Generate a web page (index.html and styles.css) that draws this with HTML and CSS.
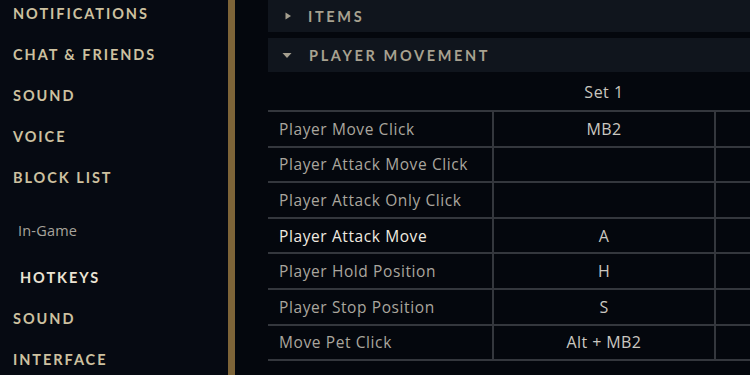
FILE: index.html
```html
<!DOCTYPE html>
<html>
<head>
<meta charset="utf-8">
<link rel="stylesheet" href="styles.css">
</head>
<body>
<div class="app">
  <nav class="sidebar">
    <ul class="menu">
      <li class="item">NOTIFICATIONS</li>
      <li class="item">CHAT &amp; FRIENDS</li>
      <li class="item">SOUND</li>
      <li class="item">VOICE</li>
      <li class="item">BLOCK LIST</li>
      <li class="group">In-Game</li>
      <li class="item active">HOTKEYS</li>
      <li class="item">SOUND</li>
      <li class="item">INTERFACE</li>
    </ul>
  </nav>
  <div class="divider"></div>
  <main class="main">
    <div class="section collapsed">
      <svg class="caret" width="7" height="8" viewBox="0 0 7 8"><path d="M0.5 0.5 L6 4 L0.5 7.5 Z" fill="#a59f8f"/></svg>
      <span>ITEMS</span>
    </div>
    <div class="section expanded">
      <svg class="caret" width="10" height="7" viewBox="0 0 10 7"><path d="M0.5 1 L9.5 1 L5 6 Z" fill="#a59f8f"/></svg>
      <span>PLAYER MOVEMENT</span>
    </div>
    <div class="table">
      <div class="thead">
        <div class="cell"></div>
        <div class="cell head">Set 1</div>
        <div class="cell"></div>
      </div>
      <div class="row"><div class="cell label">Player Move Click</div><div class="cell value">MB2</div><div class="cell"></div></div>
      <div class="row"><div class="cell label">Player Attack Move Click</div><div class="cell value"></div><div class="cell"></div></div>
      <div class="row"><div class="cell label">Player Attack Only Click</div><div class="cell value"></div><div class="cell"></div></div>
      <div class="row"><div class="cell label bright">Player Attack Move</div><div class="cell value">A</div><div class="cell"></div></div>
      <div class="row"><div class="cell label">Player Hold Position</div><div class="cell value">H</div><div class="cell"></div></div>
      <div class="row"><div class="cell label">Player Stop Position</div><div class="cell value">S</div><div class="cell"></div></div>
      <div class="row"><div class="cell label">Move Pet Click</div><div class="cell value">Alt + MB2</div><div class="cell"></div></div>
    </div>
  </main>
</div>
</body>
</html>
```
FILE: styles.css
```css
* { box-sizing: border-box; }
html, body {
  margin: 0;
  padding: 0;
  width: 750px;
  height: 375px;
  overflow: hidden;
  background: #04070d;
}
.app {
  display: flex;
  height: 375px;
}
.sidebar {
  width: 228px;
  flex: none;
  background: #060a12;
  overflow: hidden;
}
.menu {
  list-style: none;
  margin: -7.5px 0 0 0;
  padding: 0;
}
.item {
  height: 41px;
  line-height: 41px;
  padding-left: 13px;
  font-family: Lato, sans-serif;
  font-weight: bold;
  font-size: 14.5px;
  letter-spacing: 1.95px;
  color: #cdc1a0;
}
.item.active {
  padding-left: 20px;
  color: #ece4d4;
}
.group {
  margin: 21px 0 15px 0;
  height: 23px;
  line-height: 23px;
  padding-left: 18px;
  font-family: "Open Sans", sans-serif;
  font-size: 14.5px;
  letter-spacing: 0.2px;
  color: #a8a49c;
}
.divider {
  width: 7px;
  flex: none;
  background: #7d6438;
}
.main {
  flex: 1;
  padding-left: 33px;
  display: flex;
  flex-direction: column;
}
.section {
  display: flex;
  align-items: center;
  background: #10151d;
  font-family: Lato, sans-serif;
  font-weight: bold;
  font-size: 14.5px;
  letter-spacing: 2.65px;
  color: #a8a290;
}
.section.collapsed {
  height: 32px;
  padding-left: 17px;
}
.section.collapsed .caret { margin-right: 16px; }
.section.expanded {
  margin-top: 6px;
  height: 34px;
  padding-left: 14px;
}
.section.expanded .caret { margin-right: 17px; }
.table {
  display: flex;
  flex-direction: column;
}
.thead, .row {
  display: grid;
  grid-template-columns: 224px 224px 1fr;
}
.thead {
  height: 40px;
  border-bottom: 2px solid #34373d;
}
.row {
  height: 35.6px;
  border-bottom: 2px solid #34373d;
}
.cell {
  display: flex;
  align-items: center;
  font-family: "Open Sans", sans-serif;
  font-size: 15px;
}
.row .cell:nth-child(2) {
  border-left: 2px solid #34373d;
  border-right: 2px solid #34373d;
}
.head {
  justify-content: center;
  color: #c9c6bf;
  font-size: 16px;
  padding-top: 1px;
  letter-spacing: 0.5px;
}
.label {
  padding-left: 11px;
  color: #aaa69e;
  font-size: 15.5px;
  letter-spacing: 0.6px;
}
.label.bright { color: #f0ebe0; }
.value {
  justify-content: center;
  color: #cbc8c1;
  font-size: 16px;
  letter-spacing: 0.4px;
}
```
